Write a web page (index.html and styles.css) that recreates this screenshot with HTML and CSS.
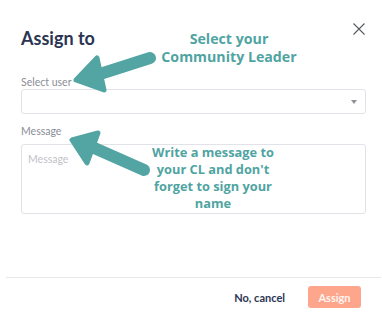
FILE: index.html
```html
<!DOCTYPE html>
<html>
<head>
<meta charset="utf-8">
<link rel="stylesheet" href="styles.css">
</head>
<body>
<div class="modal">
  <div class="header">
    <h1 class="title">Assign to</h1>
    <button class="close" aria-label="Close">
      <svg width="12" height="12" viewBox="0 0 12 12"><path d="M0.5 0.5 L11.5 11.5 M11.5 0.5 L0.5 11.5" stroke="#555a60" stroke-width="1.1" fill="none"/></svg>
    </button>
  </div>
  <div class="form">
    <label class="label label-user">Select user</label>
    <div class="select"><span class="caret"></span></div>
    <label class="label label-msg">Message</label>
    <div class="textarea"><span class="placeholder">Message</span></div>
  </div>
  <div class="footer">
    <button class="cancel">No, cancel</button>
    <button class="assign">Assign</button>
  </div>
</div>

<svg class="arrows" width="382" height="323" viewBox="0 0 382 323">
  <g fill="#52a5a3" stroke="#52a5a3" stroke-linejoin="round" stroke-linecap="round">
    <line x1="150" y1="58" x2="100" y2="74" stroke-width="12"/>
    <polygon points="76,80 97,58 104,90" stroke-width="5"/>
    <line x1="144" y1="170" x2="92" y2="147" stroke-width="12"/>
    <polygon points="72,140 98,133 87,163" stroke-width="5"/>
  </g>
</svg>
<div class="note note-1">Select your<br>Community Leader</div>
<div class="note note-2">Write a message to<br>your CL and don't<br>forget to sign your<br>name</div>
</body>
</html>
```

FILE: styles.css
```css
html, body {
  margin: 0;
  padding: 0;
  background: #ffffff;
}
body {
  width: 382px;
  height: 323px;
  position: relative;
  overflow: hidden;
  font-family: Lato, "Liberation Sans", sans-serif;
}
.modal {
  margin-left: 6px;
  width: 375px;
}
.header {
  display: flex;
  justify-content: space-between;
  align-items: flex-start;
  padding: 28px 15px 0 15px;
}
.title {
  margin: 0;
  font-size: 18px;
  line-height: 20px;
  font-weight: 700;
  color: #2b3553;
}
.close {
  border: 0;
  background: none;
  padding: 0;
  margin-top: -5px;
  margin-right: 1px;
  width: 12px;
  height: 12px;
  display: block;
}
.close svg { display: block; }
.form {
  display: flex;
  flex-direction: column;
  padding: 0 15px;
}
.label {
  font-size: 10.5px;
  line-height: 12px;
  color: #8a8e97;
}
.label-user { margin-top: 28px; }
.label-msg { margin-top: 11px; }
.select {
  margin-top: 1px;
  height: 23px;
  border: 1px solid #e2e3e8;
  border-radius: 3px;
  display: flex;
  justify-content: flex-end;
  align-items: center;
  padding-right: 8px;
}
.caret {
  width: 0;
  height: 0;
  border-left: 3.5px solid transparent;
  border-right: 3.5px solid transparent;
  border-top: 4px solid #8e9196;
}
.textarea {
  margin-top: 7px;
  border: 1px solid #e2e3e8;
  border-radius: 3px;
  padding: 2px 6px 6px;
  height: 60px;
}
.placeholder {
  font-size: 10.5px;
  line-height: 12px;
  color: #bfc2c8;
}
.footer {
  margin-top: 63px;
  border-top: 1px solid #e8e8ea;
  display: flex;
  justify-content: flex-end;
  align-items: center;
  gap: 23px;
  padding: 8px 20px 0 0;
}
.cancel {
  border: 0;
  background: none;
  padding: 0;
  font-family: Lato, "Liberation Sans", sans-serif;
  font-weight: 700;
  font-size: 11px;
  color: #2b3553;
}
.assign {
  border: 0;
  background: #fea68c;
  color: #fff4ef;
  border-radius: 3px;
  width: 53px;
  height: 22px;
  padding: 0;
  font-family: Lato, "Liberation Sans", sans-serif;
  font-weight: 700;
  font-size: 11px;
}
.arrows {
  position: absolute;
  left: 0;
  top: 0;
  pointer-events: none;
}
.note {
  position: absolute;
  text-align: center;
  font-family: "Open Sans", sans-serif;
  font-weight: 700;
  color: #4fa4a2;
}
.note-1 {
  left: 149px;
  top: 30px;
  width: 160px;
  font-size: 14.2px;
  line-height: 18px;
}
.note-2 {
  left: 138px;
  top: 144px;
  width: 150px;
  font-size: 12.8px;
  line-height: 17px;
}
```
